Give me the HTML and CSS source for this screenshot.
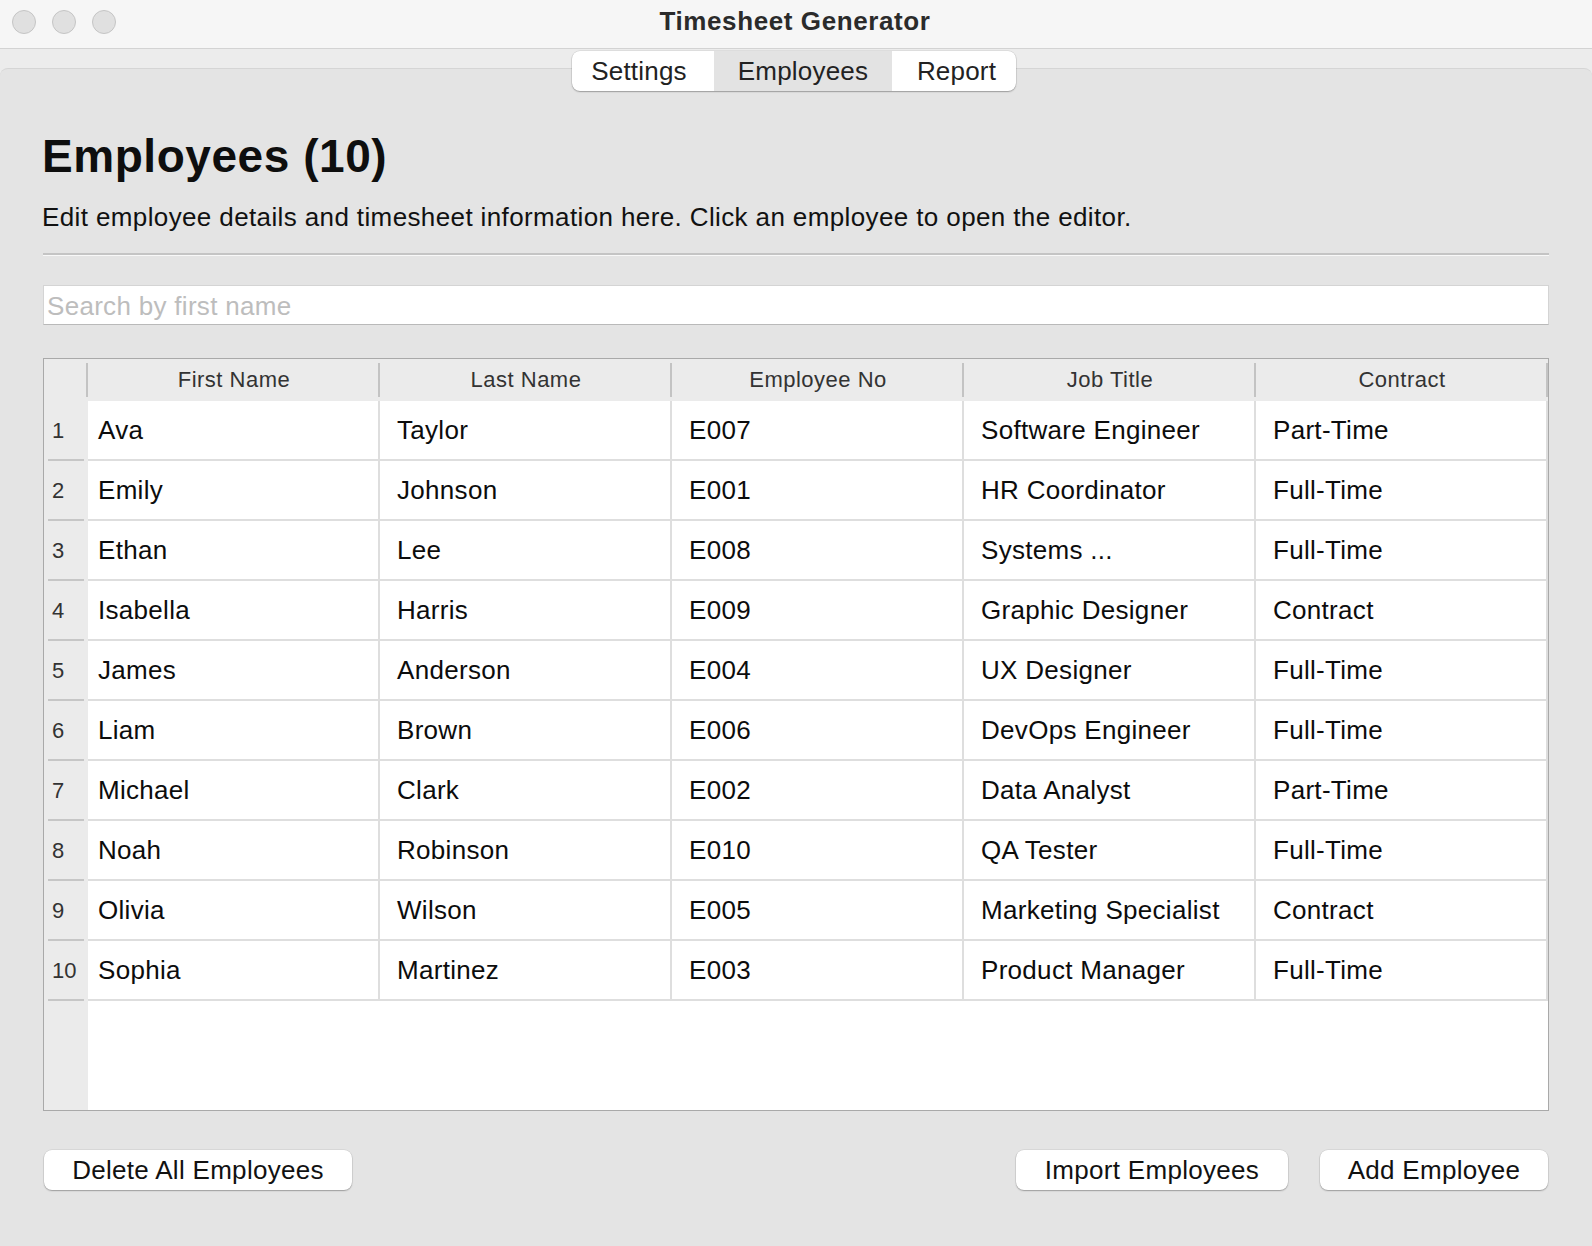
FILE: index.html
```html
<!DOCTYPE html>
<html>
<head>
<meta charset="utf-8">
<title>Timesheet Generator</title>
<link rel="stylesheet" href="styles.css">
</head>
<body>
<div class="window">
  <header class="titlebar">
    <div class="lights"><span class="light"></span><span class="light"></span><span class="light"></span></div>
    <div class="title">Timesheet Generator</div>
    <div class="spacer"></div>
  </header>
  <div class="tabstrip">
    <div class="tabs">
      <div class="tab tab-settings">Settings</div>
      <div class="tab tab-employees active">Employees</div>
      <div class="tab tab-report">Report</div>
    </div>
  </div>
  <main class="pane">
    <h1 class="heading">Employees (10)</h1>
    <p class="desc">Edit employee details and timesheet information here. Click an employee to open the editor.</p>
    <div class="divider"></div>
    <input class="search" type="text" placeholder="Search by first name">
    <div class="table">
      <div class="thead">
        <div class="corner"></div>
        <div class="th">First Name</div>
        <div class="th">Last Name</div>
        <div class="th">Employee No</div>
        <div class="th">Job Title</div>
        <div class="th">Contract</div>
      </div>
      <div class="tr"><div class="rn">1</div><div class="td first">Ava</div><div class="td">Taylor</div><div class="td">E007</div><div class="td">Software Engineer</div><div class="td">Part-Time</div></div>
      <div class="tr"><div class="rn">2</div><div class="td first">Emily</div><div class="td">Johnson</div><div class="td">E001</div><div class="td">HR Coordinator</div><div class="td">Full-Time</div></div>
      <div class="tr"><div class="rn">3</div><div class="td first">Ethan</div><div class="td">Lee</div><div class="td">E008</div><div class="td">Systems ...</div><div class="td">Full-Time</div></div>
      <div class="tr"><div class="rn">4</div><div class="td first">Isabella</div><div class="td">Harris</div><div class="td">E009</div><div class="td">Graphic Designer</div><div class="td">Contract</div></div>
      <div class="tr"><div class="rn">5</div><div class="td first">James</div><div class="td">Anderson</div><div class="td">E004</div><div class="td">UX Designer</div><div class="td">Full-Time</div></div>
      <div class="tr"><div class="rn">6</div><div class="td first">Liam</div><div class="td">Brown</div><div class="td">E006</div><div class="td">DevOps Engineer</div><div class="td">Full-Time</div></div>
      <div class="tr"><div class="rn">7</div><div class="td first">Michael</div><div class="td">Clark</div><div class="td">E002</div><div class="td">Data Analyst</div><div class="td">Part-Time</div></div>
      <div class="tr"><div class="rn">8</div><div class="td first">Noah</div><div class="td">Robinson</div><div class="td">E010</div><div class="td">QA Tester</div><div class="td">Full-Time</div></div>
      <div class="tr"><div class="rn">9</div><div class="td first">Olivia</div><div class="td">Wilson</div><div class="td">E005</div><div class="td">Marketing Specialist</div><div class="td">Contract</div></div>
      <div class="tr"><div class="rn">10</div><div class="td first">Sophia</div><div class="td">Martinez</div><div class="td">E003</div><div class="td">Product Manager</div><div class="td">Full-Time</div></div>
      <div class="filler"><div class="rn-fill"></div><div class="fill-white"></div></div>
    </div>
    <div class="actions">
      <button class="btn btn-delete">Delete All Employees</button>
      <div class="grow"></div>
      <button class="btn btn-import">Import Employees</button>
      <button class="btn btn-add">Add Employee</button>
    </div>
  </main>
</div>
</body>
</html>
```

FILE: styles.css
```css
* { box-sizing: border-box; }
html, body { margin: 0; padding: 0; }
body {
  width: 1592px;
  height: 1246px;
  overflow: hidden;
  font-family: "Liberation Sans", Arial, sans-serif;
  background: #ececec;
}
.window {
  width: 1592px;
  height: 1246px;
  display: flex;
  flex-direction: column;
  background: #ececec;
}
.titlebar {
  height: 49px;
  flex: none;
  background: #f6f6f6;
  border-bottom: 1px solid #d3d3d3;
  display: grid;
  grid-template-columns: 1fr auto 1fr;
}
.lights {
  display: flex;
  gap: 16px;
  padding: 10px 0 0 12px;
}
.light {
  width: 24px;
  height: 24px;
  border-radius: 50%;
  background: #e0e0e0;
  border: 1px solid #c5c5c5;
}
.title {
  font-weight: bold;
  font-size: 26px;
  letter-spacing: 0.6px;
  line-height: 30px;
  padding: 6px 2px 0 0;
  color: #2b2b2b;
}
.tabstrip {
  flex: none;
  display: flex;
  justify-content: center;
  padding: 2px 4px 0 0;
}
.tabs {
  position: relative;
  z-index: 1;
  display: flex;
  height: 40px;
  border-radius: 8px;
  overflow: hidden;
  background: #fff;
  box-shadow: 0 1px 1.5px rgba(0,0,0,0.28), 0 0 0 0.5px rgba(0,0,0,0.12);
}
.tab {
  height: 40px;
  display: flex;
  align-items: center;
  justify-content: center;
  font-size: 26px;
  letter-spacing: 0.2px;
  color: #222;
  padding-top: 1px;
}
.tab-settings { width: 142px; padding-right: 8px; }
.tab-employees { width: 178px; }
.tab-report { width: 124px; padding-left: 5px; }
.tab.active { background: #e3e3e3; }

.pane {
  flex: 1;
  margin-top: -23px;
  background: #e4e4e4;
  border-top: 1px solid #d5d5d5;
  border-radius: 8px 8px 0 0;
  padding: 0 43px;
  display: flex;
  flex-direction: column;
}
.heading {
  margin: 64px 0 0 -1px;
  font-size: 46px;
  line-height: 46px;
  font-weight: bold;
  letter-spacing: 0.55px;
  color: #0e0e0e;
}
.desc {
  margin: 23px 0 0 -1px;
  font-size: 26px;
  line-height: 30px;
  letter-spacing: 0.38px;
  color: #111;
}
.divider {
  margin-top: 21px;
  height: 3px;
  border-top: 2px solid #c4c4c4;
  border-bottom: 1px solid #f8f8f8;
}
.search {
  display: block;
  margin: 29px 0 0 0;
  width: 100%;
  height: 40px;
  background: #fff;
  border: 1px solid #d4d4d4;
  border-bottom-color: #b9b9b9;
  border-radius: 0;
  padding: 3px 3px 0 3px;
  font-family: "Liberation Sans", Arial, sans-serif;
  font-size: 26px;
  letter-spacing: 0.3px;
  color: #111;
  outline: none;
}
.search::placeholder { color: #bdbdbd; }

.table {
  margin-top: 33px;
  height: 753px;
  border: 1px solid #a9a9a9;
  display: flex;
  flex-direction: column;
  background: #fff;
}
.thead, .tr {
  display: grid;
  grid-template-columns: 44px repeat(5, 292px);
  flex: none;
}
.thead {
  height: 42px;
  background: #ebebeb;
}
.corner, .th { position: relative; }
.corner::after, .th::after {
  content: "";
  position: absolute;
  right: 0;
  top: 4px;
  bottom: 4px;
  width: 2px;
  background: #c3c3c3;
}
.th {
  display: flex;
  align-items: center;
  justify-content: center;
  font-size: 22px;
  letter-spacing: 0.5px;
  color: #333;
  padding-bottom: 1px;
}
.tr { height: 60px; }
.rn {
  position: relative;
  background: #ebebeb;
  display: flex;
  align-items: center;
  padding: 0 0 1px 8px;
  font-size: 22px;
  color: #333;
}
.rn::after {
  content: "";
  position: absolute;
  left: 4px;
  right: 4px;
  bottom: 0;
  height: 2px;
  background: #c6c6c6;
}
.td {
  background: #fff;
  border-right: 2px solid #dedede;
  border-bottom: 2px solid #dedede;
  display: flex;
  align-items: center;
  padding-left: 17px;
  font-size: 26px;
  letter-spacing: 0.3px;
  color: #0c0c0c;
  white-space: nowrap;
  overflow: hidden;
}
.td.first { padding-left: 10px; }
.filler {
  flex: 1;
  display: grid;
  grid-template-columns: 44px 1fr;
}
.rn-fill { background: #ebebeb; }
.fill-white { background: #fff; }

.actions {
  margin-top: 39px;
  display: flex;
  gap: 32px;
  padding: 0 1px;
}
.grow { flex: 1; }
.btn {
  height: 40px;
  border: 0;
  border-radius: 8px;
  background: #fff;
  box-shadow: 0 1px 1.5px rgba(0,0,0,0.28), 0 0 0 0.5px rgba(0,0,0,0.1);
  font-family: "Liberation Sans", Arial, sans-serif;
  font-size: 26px;
  letter-spacing: 0.3px;
  color: #111;
  padding: 0;
}
.btn-delete { width: 308px; }
.btn-import { width: 272px; }
.btn-add { width: 228px; }
```
